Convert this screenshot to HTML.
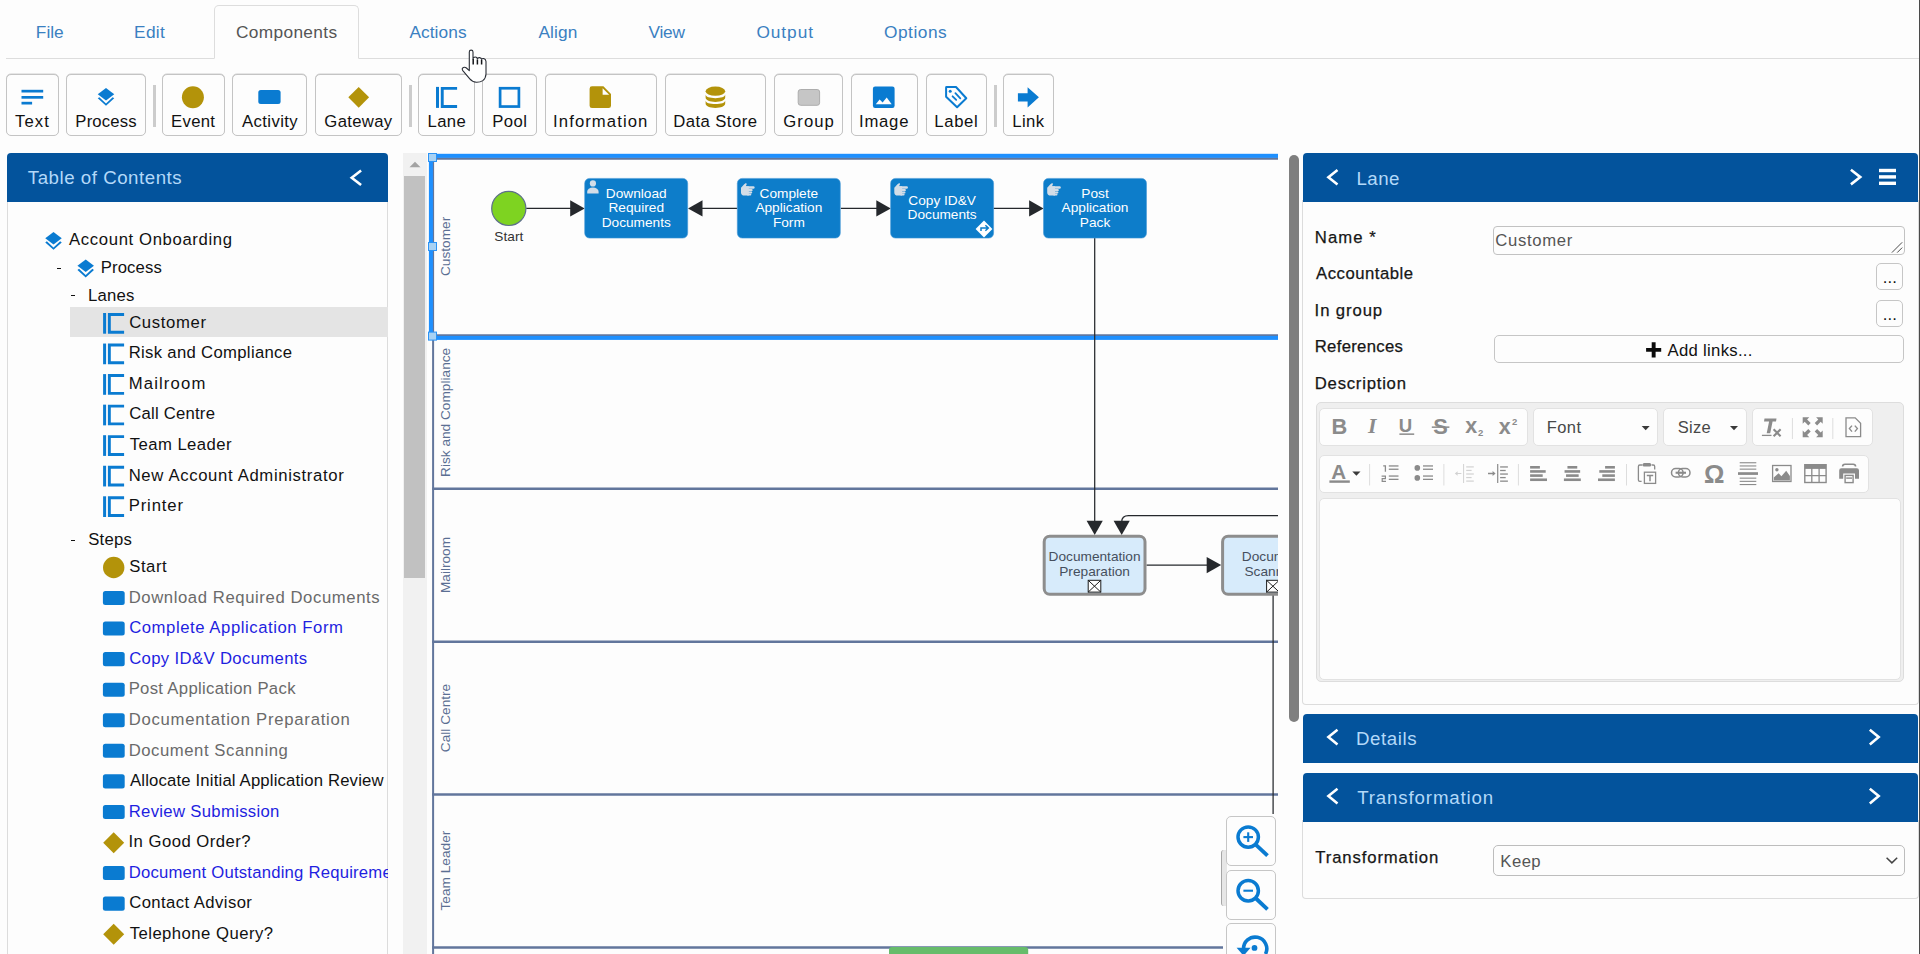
<!DOCTYPE html>
<html lang="en">
<head>
<meta charset="utf-8">
<title>Process Editor - Account Onboarding</title>
<style>
html,body{margin:0;padding:0}
body{width:1920px;height:954px;overflow:hidden;position:relative;background:#fdfdfd;
  font-family:"Liberation Sans",sans-serif;color:#111;font-size:16.7px}
*{box-sizing:border-box}
.abs,.t,.btn,.sep,.hdr,.pbody,.cke-g,.ibtn{position:absolute}
.t{white-space:nowrap;line-height:1;display:block}
svg{position:absolute;overflow:visible}
.btn{top:74px;height:62px;border:1px solid #c4c4c4;border-radius:5px;background:#fdfdfd;box-shadow:0 -0.5px 0.5px 0 #d0d0d0}
.sep{top:85px;height:42px;width:3px;background:#cccccc}
.hdr{background:#03539c;height:49px;border-radius:4px 4px 0 0}
.pbody{border:1px solid #dcdcdc;border-top:0;border-radius:0 0 4px 4px;background:#fdfdfd}
.ibtn{border:1px solid #c6c6c6;border-radius:5px;background:#fdfdfd}
.cke-g{border:1px solid #e2e2e2;border-radius:5px;background:#fdfdfd}
ul,li{list-style:none;margin:0;padding:0}
</style>
</head>
<body>
<nav class="abs" style="left:0;top:0;width:1920px;height:59px">
<div class="abs" style="left:6px;top:58px;width:1914px;height:1px;background:#dddddd"></div>
<div class="abs" style="left:214px;top:5px;width:145px;height:54px;border:1px solid #dddddd;border-bottom-color:#fdfdfd;border-radius:5px 5px 0 0;background:#fdfdfd"></div>
<a><span class="t" style="left:35.82px;top:24.00px;font-size:17.30px;color:#3a80c1;letter-spacing:0.007px;">File</span></a>
<a><span class="t" style="left:134.12px;top:24.00px;font-size:17.30px;color:#3a80c1;letter-spacing:0.274px;">Edit</span></a>
<a><span class="t" style="left:235.94px;top:24.00px;font-size:17.30px;color:#555555;letter-spacing:0.353px;">Components</span></a>
<a><span class="t" style="left:409.40px;top:24.00px;font-size:17.30px;color:#3a80c1;letter-spacing:0.079px;">Actions</span></a>
<a><span class="t" style="left:538.50px;top:24.00px;font-size:17.30px;color:#3a80c1;letter-spacing:0.097px;">Align</span></a>
<a><span class="t" style="left:648.60px;top:24.00px;font-size:17.30px;color:#3a80c1;letter-spacing:-0.278px;">View</span></a>
<a><span class="t" style="left:756.42px;top:24.00px;font-size:17.30px;color:#3a80c1;letter-spacing:0.939px;">Output</span></a>
<a><span class="t" style="left:884.02px;top:24.00px;font-size:17.30px;color:#3a80c1;letter-spacing:0.511px;">Options</span></a>
</nav>
<div class="abs" id="toolbar" style="left:0;top:0;width:0;height:0">
<div class="btn" style="left:6.0px;width:53.0px"></div><svg style="left:0;top:0" width="1" height="1"><rect x="21.5" y="89.8" width="21.7" height="2.7" fill="#0a7bd1"/><rect x="21.5" y="96" width="21.7" height="2.7" fill="#0a7bd1"/><rect x="21.5" y="101.8" width="10.6" height="2.7" fill="#0a7bd1"/></svg><span class="t" style="left:14.92px;top:114.00px;font-size:16.70px;color:#111;letter-spacing:1.135px;">Text</span>
<div class="btn" style="left:66.0px;width:80.0px"></div><svg style="left:0;top:0" width="1" height="1"><path d="M106.00 87.90 L114.25 94.15 L106.00 100.40 L97.75 94.15 Z" fill="#0a7bd1"/><path d="M97.75 98.35 L99.35 97.15 L106.00 103.40 L112.65 97.15 L114.25 98.35 L106.00 105.70 Z" fill="#0a7bd1"/></svg><span class="t" style="left:75.36px;top:114.00px;font-size:16.70px;color:#111;letter-spacing:0.149px;">Process</span>
<div class="btn" style="left:162.0px;width:62.5px"></div><svg style="left:0;top:0" width="1" height="1"><circle cx="192.9" cy="97.3" r="11" fill="#b3930a"/></svg><span class="t" style="left:171.06px;top:114.00px;font-size:16.70px;color:#111;letter-spacing:0.320px;">Event</span>
<div class="btn" style="left:232.0px;width:75.0px"></div><svg style="left:0;top:0" width="1" height="1"><rect x="258.3" y="90" width="22.3" height="14" rx="2.5" fill="#0a7bd1"/></svg><span class="t" style="left:242.00px;top:114.00px;font-size:16.70px;color:#111;letter-spacing:0.402px;">Activity</span>
<div class="btn" style="left:315.0px;width:87.0px"></div><svg style="left:0;top:0" width="1" height="1"><path d="M358.7 86.9 L369.1 97.3 L358.7 107.7 L348.3 97.3 Z" fill="#b3930a"/></svg><span class="t" style="left:324.37px;top:114.00px;font-size:16.70px;color:#111;letter-spacing:0.322px;">Gateway</span>
<div class="btn" style="left:418.0px;width:57.0px"></div><svg style="left:0;top:0" width="1" height="1"><rect x="436.00" y="86.90" width="3.00" height="21.00" fill="#0a7bd1"/><path d="M457.10 88.35 H442.25 V106.45 H457.10" fill="none" stroke="#0a7bd1" stroke-width="2.90"/></svg><span class="t" style="left:427.41px;top:114.00px;font-size:16.70px;color:#111;letter-spacing:0.441px;">Lane</span>
<div class="btn" style="left:482.0px;width:55.0px"></div><svg style="left:0;top:0" width="1" height="1"><rect x="500.1" y="88.25" width="18.8" height="18.3" fill="none" stroke="#0a7bd1" stroke-width="2.7"/></svg><span class="t" style="left:492.26px;top:114.00px;font-size:16.70px;color:#111;letter-spacing:0.450px;">Pool</span>
<div class="btn" style="left:544.5px;width:112.0px"></div><svg style="left:0;top:0" width="1" height="1"><path d="M592 86.3 H603.4 L611 93.9 V105.7 a2.4 2.4 0 0 1 -2.4 2.4 H592 a2.4 2.4 0 0 1 -2.4 -2.4 V88.7 a2.4 2.4 0 0 1 2.4 -2.4 Z" fill="#b3930a"/><path d="M602.6 88.2 L609.2 94.8 H602.6 Z" fill="#fdfdfd"/></svg><span class="t" style="left:553.10px;top:114.00px;font-size:16.70px;color:#111;letter-spacing:1.078px;">Information</span>
<div class="btn" style="left:664.5px;width:101.5px"></div><svg style="left:0;top:0" width="1" height="1"><ellipse cx="715.4" cy="91.2" rx="9.8" ry="4.6" fill="#b3930a"/><path d="M705.6 94.6 C705.6 96.9 709.8 98.2 715.4 98.2 C721 98.2 725.2 96.9 725.2 94.6 V97.6 C725.2 100.2 721 101.9 715.4 101.9 C709.8 101.9 705.6 100.2 705.6 97.6 Z" fill="#b3930a"/><path d="M705.6 100.4 C705.6 102.7 709.8 104 715.4 104 C721 104 725.2 102.7 725.2 100.4 V103.6 C725.2 106.2 721 108 715.4 108 C709.8 108 705.6 106.2 705.6 103.6 Z" fill="#b3930a"/></svg><span class="t" style="left:673.26px;top:114.00px;font-size:16.70px;color:#111;letter-spacing:0.433px;">Data Store</span>
<div class="btn" style="left:774.0px;width:69.0px"></div><svg style="left:0;top:0" width="1" height="1"><rect x="798.2" y="89.5" width="21.4" height="15.8" rx="2.5" fill="#c6c6c6" stroke="#adadad" stroke-width="1"/></svg><span class="t" style="left:783.37px;top:114.00px;font-size:16.70px;color:#111;letter-spacing:1.002px;">Group</span>
<div class="btn" style="left:850.5px;width:67.0px"></div><svg style="left:0;top:0" width="1" height="1"><rect x="872.9" y="86.5" width="21.7" height="21.4" rx="2.2" fill="#0a7bd1"/><path d="M875.8 104.2 L879.6 99.6 L882.6 102.6 L886.7 97.5 L891.7 104.2 Z" fill="#fdfdfd"/></svg><span class="t" style="left:859.00px;top:114.00px;font-size:16.70px;color:#111;letter-spacing:0.769px;">Image</span>
<div class="btn" style="left:925.5px;width:61.0px"></div><svg style="left:0;top:0" width="1" height="1"><path d="M946.1 87.4 Q946.1 87 946.6 87 H956 L966.3 98.2 L957.1 107.2 L946.1 96.8 Z" fill="none" stroke="#0a7bd1" stroke-width="2" stroke-linejoin="round"/><circle cx="950.2" cy="91.3" r="1.5" fill="#0a7bd1"/><path d="M955.4 93.2 L960.3 98.3 M952.6 96.3 L956.2 99.9" stroke="#0a7bd1" stroke-width="1.8" stroke-linecap="round" fill="none"/></svg><span class="t" style="left:934.36px;top:114.00px;font-size:16.70px;color:#111;letter-spacing:0.603px;">Label</span>
<div class="btn" style="left:1003.0px;width:51.0px"></div><svg style="left:0;top:0" width="1" height="1"><path d="M1017.9 93.2 H1027.6 V87.2 L1038.9 97.3 L1027.6 107.4 V101.4 H1017.9 Z" fill="#0a7bd1"/></svg><span class="t" style="left:1012.16px;top:114.00px;font-size:16.70px;color:#111;letter-spacing:0.439px;">Link</span>
<div class="sep" style="left:153px"></div><div class="sep" style="left:409px"></div><div class="sep" style="left:994px"></div>
</div>
<aside class="abs" style="left:0;top:0;width:388px;height:954px;overflow:hidden">
<div class="abs" style="left:7px;top:202px;width:381px;height:760px;border-left:1px solid #dcdcdc;border-right:1px solid #dcdcdc"></div>
<div class="hdr" style="left:7px;top:153px;width:381px"></div><span class="t" style="left:27.83px;top:169.00px;font-size:18.70px;color:#b3d9f9;letter-spacing:0.524px;">Table of Contents</span><svg style="left:0;top:0" width="1" height="1"><path d="M361.09 170.50 L351.73 177.75 L361.09 185.00" fill="none" stroke="#ffffff" stroke-width="2.60"/></svg>
<ul>
<li><svg style="left:0;top:0" width="1" height="1"><path d="M53.50 232.00 L61.75 238.25 L53.50 244.50 L45.25 238.25 Z" fill="#0a7bd1"/><path d="M45.25 242.45 L46.85 241.25 L53.50 247.50 L60.15 241.25 L61.75 242.45 L53.50 249.80 Z" fill="#0a7bd1"/></svg><span class="t" style="left:69.10px;top:232.00px;font-size:16.70px;color:#111;letter-spacing:0.633px;">Account Onboarding</span></li>
<li><div class="abs" style="left:57px;top:268px;width:4.3px;height:1px;background:#111"></div><svg style="left:0;top:0" width="1" height="1"><path d="M85.70 259.60 L93.95 265.85 L85.70 272.10 L77.45 265.85 Z" fill="#0a7bd1"/><path d="M77.45 270.05 L79.05 268.85 L85.70 275.10 L92.35 268.85 L93.95 270.05 L85.70 277.40 Z" fill="#0a7bd1"/></svg><span class="t" style="left:100.66px;top:260.00px;font-size:16.70px;color:#111;letter-spacing:0.149px;">Process</span></li>
<li><div class="abs" style="left:70.8px;top:295px;width:4.3px;height:1px;background:#111"></div><span class="t" style="left:88.06px;top:288.00px;font-size:16.70px;color:#111;letter-spacing:0.205px;">Lanes</span></li>
<li><div class="abs" style="left:70px;top:307px;width:318px;height:30px;background:#e4e4e4"></div></li>
<li><svg style="left:0;top:0" width="1" height="1"><rect x="103.10" y="313.00" width="3.00" height="20.70" fill="#0a7bd1"/><path d="M124.10 314.45 H109.35 V332.25 H124.10" fill="none" stroke="#0a7bd1" stroke-width="2.90"/></svg><span class="t" style="left:129.16px;top:315.00px;font-size:16.70px;color:#111;letter-spacing:0.638px;">Customer</span></li>
<li><svg style="left:0;top:0" width="1" height="1"><rect x="103.10" y="343.55" width="3.00" height="20.70" fill="#0a7bd1"/><path d="M124.10 345.00 H109.35 V362.80 H124.10" fill="none" stroke="#0a7bd1" stroke-width="2.90"/></svg><span class="t" style="left:128.66px;top:345.00px;font-size:16.70px;color:#111;letter-spacing:0.318px;">Risk and Compliance</span></li>
<li><svg style="left:0;top:0" width="1" height="1"><rect x="103.10" y="374.10" width="3.00" height="20.70" fill="#0a7bd1"/><path d="M124.10 375.55 H109.35 V393.35 H124.10" fill="none" stroke="#0a7bd1" stroke-width="2.90"/></svg><span class="t" style="left:128.66px;top:376.00px;font-size:16.70px;color:#111;letter-spacing:1.146px;">Mailroom</span></li>
<li><svg style="left:0;top:0" width="1" height="1"><rect x="103.10" y="404.65" width="3.00" height="20.70" fill="#0a7bd1"/><path d="M124.10 406.10 H109.35 V423.90 H124.10" fill="none" stroke="#0a7bd1" stroke-width="2.90"/></svg><span class="t" style="left:129.16px;top:406.00px;font-size:16.70px;color:#111;letter-spacing:0.229px;">Call Centre</span></li>
<li><svg style="left:0;top:0" width="1" height="1"><rect x="103.10" y="435.20" width="3.00" height="20.70" fill="#0a7bd1"/><path d="M124.10 436.65 H109.35 V454.45 H124.10" fill="none" stroke="#0a7bd1" stroke-width="2.90"/></svg><span class="t" style="left:129.67px;top:437.00px;font-size:16.70px;color:#111;letter-spacing:0.457px;">Team Leader</span></li>
<li><svg style="left:0;top:0" width="1" height="1"><rect x="103.10" y="465.75" width="3.00" height="20.70" fill="#0a7bd1"/><path d="M124.10 467.20 H109.35 V485.00 H124.10" fill="none" stroke="#0a7bd1" stroke-width="2.90"/></svg><span class="t" style="left:128.66px;top:468.00px;font-size:16.70px;color:#111;letter-spacing:0.656px;">New Account Administrator</span></li>
<li><svg style="left:0;top:0" width="1" height="1"><rect x="103.10" y="496.30" width="3.00" height="20.70" fill="#0a7bd1"/><path d="M124.10 497.75 H109.35 V515.55 H124.10" fill="none" stroke="#0a7bd1" stroke-width="2.90"/></svg><span class="t" style="left:128.66px;top:498.00px;font-size:16.70px;color:#111;letter-spacing:0.878px;">Printer</span></li>
<li><div class="abs" style="left:70.8px;top:540px;width:4.3px;height:1px;background:#111"></div><span class="t" style="left:88.15px;top:532.00px;font-size:16.70px;color:#111;letter-spacing:0.258px;">Steps</span></li>
<li><svg style="left:0;top:0" width="1" height="1"><circle cx="113.7" cy="567.50" r="10.7" fill="#b3930a"/></svg><span class="t" style="left:129.25px;top:559.00px;font-size:16.70px;color:#111;letter-spacing:0.533px;">Start</span></li>
<li><svg style="left:0;top:0" width="1" height="1"><rect x="102.9" y="590.96" width="21.8" height="14.1" rx="2.5" fill="#0a7bd1"/></svg><span class="t" style="left:128.66px;top:590.00px;font-size:16.70px;color:#6a6a6a;letter-spacing:0.590px;">Download Required Documents</span></li>
<li><svg style="left:0;top:0" width="1" height="1"><rect x="102.9" y="621.52" width="21.8" height="14.1" rx="2.5" fill="#0a7bd1"/></svg><span class="t" style="left:129.16px;top:620.00px;font-size:16.70px;color:#1f1fe0;letter-spacing:0.562px;">Complete Application Form</span></li>
<li><svg style="left:0;top:0" width="1" height="1"><rect x="102.9" y="652.08" width="21.8" height="14.1" rx="2.5" fill="#0a7bd1"/></svg><span class="t" style="left:129.16px;top:651.00px;font-size:16.70px;color:#1f1fe0;letter-spacing:0.356px;">Copy ID&amp;V Documents</span></li>
<li><svg style="left:0;top:0" width="1" height="1"><rect x="102.9" y="682.64" width="21.8" height="14.1" rx="2.5" fill="#0a7bd1"/></svg><span class="t" style="left:128.66px;top:681.00px;font-size:16.70px;color:#6a6a6a;letter-spacing:0.317px;">Post Application Pack</span></li>
<li><svg style="left:0;top:0" width="1" height="1"><rect x="102.9" y="713.20" width="21.8" height="14.1" rx="2.5" fill="#0a7bd1"/></svg><span class="t" style="left:128.66px;top:712.00px;font-size:16.70px;color:#6a6a6a;letter-spacing:0.752px;">Documentation Preparation</span></li>
<li><svg style="left:0;top:0" width="1" height="1"><rect x="102.9" y="743.76" width="21.8" height="14.1" rx="2.5" fill="#0a7bd1"/></svg><span class="t" style="left:128.66px;top:743.00px;font-size:16.70px;color:#6a6a6a;letter-spacing:0.554px;">Document Scanning</span></li>
<li><svg style="left:0;top:0" width="1" height="1"><rect x="102.9" y="774.32" width="21.8" height="14.1" rx="2.5" fill="#0a7bd1"/></svg><span class="t" style="left:130.00px;top:773.00px;font-size:16.70px;color:#111;letter-spacing:0.172px;">Allocate Initial Application Review</span></li>
<li><svg style="left:0;top:0" width="1" height="1"><rect x="102.9" y="804.88" width="21.8" height="14.1" rx="2.5" fill="#0a7bd1"/></svg><span class="t" style="left:128.66px;top:804.00px;font-size:16.70px;color:#1f1fe0;letter-spacing:0.321px;">Review Submission</span></li>
<li><svg style="left:0;top:0" width="1" height="1"><path d="M113.7 832.14 L124.2 842.64 L113.7 853.14 L103.2 842.64 Z" fill="#b3930a"/></svg><span class="t" style="left:128.50px;top:834.00px;font-size:16.70px;color:#111;letter-spacing:0.467px;">In Good Order?</span></li>
<li><svg style="left:0;top:0" width="1" height="1"><rect x="102.9" y="866.00" width="21.8" height="14.1" rx="2.5" fill="#0a7bd1"/></svg><span class="t" style="left:128.66px;top:865.00px;font-size:16.70px;color:#1f1fe0;letter-spacing:0.211px;">Document Outstanding Requirements</span></li>
<li><svg style="left:0;top:0" width="1" height="1"><rect x="102.9" y="896.56" width="21.8" height="14.1" rx="2.5" fill="#0a7bd1"/></svg><span class="t" style="left:129.16px;top:895.00px;font-size:16.70px;color:#111;letter-spacing:0.420px;">Contact Advisor</span></li>
<li><svg style="left:0;top:0" width="1" height="1"><path d="M113.7 923.82 L124.2 934.32 L113.7 944.82 L103.2 934.32 Z" fill="#b3930a"/></svg><span class="t" style="left:129.67px;top:926.00px;font-size:16.70px;color:#111;letter-spacing:0.464px;">Telephone Query?</span></li>
</ul>
</aside>
<div class="abs" style="left:403px;top:153px;width:24px;height:801px;background:#f1f1f1"></div><svg style="left:0;top:0" width="1" height="1"><path d="M409.5 167.2 L415 161.8 L420.5 167.2 Z" fill="#a3a3a3"/></svg><div class="abs" style="left:404px;top:176px;width:21px;height:402px;background:#c1c1c1"></div>
<div class="abs" style="left:1289.2px;top:155px;width:9.6px;height:567px;background:#7f7f7f;border-radius:5px"></div>
<div class="abs" style="left:1919px;top:0;width:1px;height:954px;background:#4a4a4a"></div>
<svg id="diagram" style="left:0;top:0" width="1920" height="954" viewBox="0 0 1920 954" font-family="'Liberation Sans', sans-serif">
<defs><clipPath id="vp"><rect x="428" y="153" width="850" height="801"/></clipPath><clipPath id="vp2"><rect x="428" y="153" width="795" height="801"/></clipPath></defs>
<g clip-path="url(#vp)">
<path d="M433.1 158 V960" stroke="#62769c" stroke-width="2" fill="none"/><path d="M432.2 158.40 H1300" stroke="#62769c" stroke-width="2.5" fill="none"/><path d="M432.2 335.50 H1300" stroke="#62769c" stroke-width="2.5" fill="none"/><path d="M432.2 488.75 H1300" stroke="#62769c" stroke-width="2.5" fill="none"/><path d="M432.2 641.75 H1300" stroke="#62769c" stroke-width="2.5" fill="none"/><path d="M432.2 794.50 H1300" stroke="#62769c" stroke-width="2.5" fill="none"/><g clip-path="url(#vp2)"><path d="M432.2 947.6 H1300" stroke="#62769c" stroke-width="2.5" fill="none"/></g>
<text transform="translate(450.3 246.40) rotate(-90)" text-anchor="middle" font-size="13.68" fill="#5b6f93">Customer</text><text transform="translate(450.3 412.40) rotate(-90)" text-anchor="middle" font-size="13.68" fill="#5b6f93">Risk and Compliance</text><text transform="translate(450.3 565.00) rotate(-90)" text-anchor="middle" font-size="13.68" fill="#5b6f93">Mailroom</text><text transform="translate(450.3 718.00) rotate(-90)" text-anchor="middle" font-size="13.68" fill="#5b6f93">Call Centre</text><text transform="translate(450.3 870.60) rotate(-90)" text-anchor="middle" font-size="13.68" fill="#5b6f93">Team Leader</text>
<rect x="430.9" y="155.8" width="900" height="182.1" fill="none" stroke="#1e90ff" stroke-width="4"/><rect x="428.50" y="153.50" width="8" height="8" fill="#a8d2f4" stroke="#2b93f5" stroke-width="1"/><rect x="428.50" y="242.50" width="8" height="8" fill="#a8d2f4" stroke="#2b93f5" stroke-width="1"/><rect x="428.50" y="332.10" width="8" height="8" fill="#a8d2f4" stroke="#2b93f5" stroke-width="1"/>
<path d="M526.20 208.40 H571.20" stroke="#25282c" stroke-width="1.3" fill="none"/><path d="M570.20 200.20 L584.70 208.40 L570.20 216.60 Z" fill="#25282c"/><path d="M737.30 208.40 H701.50" stroke="#25282c" stroke-width="1.3" fill="none"/><path d="M702.50 200.20 L688.00 208.40 L702.50 216.60 Z" fill="#25282c"/><path d="M840.80 208.40 H877.30" stroke="#25282c" stroke-width="1.3" fill="none"/><path d="M876.30 200.20 L890.80 208.40 L876.30 216.60 Z" fill="#25282c"/><path d="M993.40 208.40 H1030.10" stroke="#25282c" stroke-width="1.3" fill="none"/><path d="M1029.10 200.20 L1043.60 208.40 L1029.10 216.60 Z" fill="#25282c"/><path d="M1094.7 238 V521.5" stroke="#25282c" stroke-width="1.25" fill="none"/><path d="M1086.60 520.70 L1102.80 520.70 L1094.70 534.90 Z" fill="#25282c"/><path d="M1300 515.7 H1128.5 Q1121.7 515.7 1121.7 522" stroke="#25282c" stroke-width="1.25" fill="none"/><path d="M1113.60 520.70 L1129.80 520.70 L1121.70 534.90 Z" fill="#25282c"/><path d="M1146.50 565.10 H1207.70" stroke="#25282c" stroke-width="1.3" fill="none"/><path d="M1206.70 556.90 L1221.20 565.10 L1206.70 573.30 Z" fill="#25282c"/><path d="M1273.1 595 V814" stroke="#25282c" stroke-width="1.25" fill="none"/>
<circle cx="508.8" cy="208.4" r="17.1" fill="#7ed321" stroke="#5e708b" stroke-width="1.2"/><text x="508.80" y="240.60" text-anchor="middle" font-size="13.68" fill="#333333">Start</text>
<rect x="584.70" y="178.4" width="103" height="59.7" rx="5" fill="#0d7dca" stroke="#4a9bd6" stroke-width="0.6"/><circle cx="592.90" cy="183.40" r="3.1" fill="#d3dde7"/><path d="M587.20 193.40 v-1.6 a5.7 4.2 0 0 1 11.4 0 v1.6 Z" fill="#d3dde7"/><text x="636.25" y="197.50" text-anchor="middle" font-size="13.68" fill="#ffffff">Download</text><text x="636.25" y="212.20" text-anchor="middle" font-size="13.68" fill="#ffffff">Required</text><text x="636.25" y="226.90" text-anchor="middle" font-size="13.68" fill="#ffffff">Documents</text><rect x="737.30" y="178.4" width="103" height="59.7" rx="5" fill="#0d7dca" stroke="#4a9bd6" stroke-width="0.6"/><g transform="translate(740.80 183.10)" fill="#d3dde7"><path d="M0.2 4.6 L3.4 1.2 L5.2 0 L6 1 L5 3.2 H8 V12.5 H3.7 Q0.2 12.5 0.2 9.4 Z"/><rect x="4" y="3.2" width="9.8" height="2.5" rx="1.2"/><rect x="6" y="6" width="5.8" height="2.1" rx="1"/><rect x="6" y="8.3" width="5.4" height="2" rx="1"/><rect x="6" y="10.5" width="4.5" height="2" rx="1"/></g><text x="788.85" y="197.50" text-anchor="middle" font-size="13.68" fill="#ffffff">Complete</text><text x="788.85" y="212.20" text-anchor="middle" font-size="13.68" fill="#ffffff">Application</text><text x="788.85" y="226.90" text-anchor="middle" font-size="13.68" fill="#ffffff">Form</text><rect x="890.60" y="178.4" width="103" height="59.7" rx="5" fill="#0d7dca" stroke="#4a9bd6" stroke-width="0.6"/><g transform="translate(894.10 183.10)" fill="#d3dde7"><path d="M0.2 4.6 L3.4 1.2 L5.2 0 L6 1 L5 3.2 H8 V12.5 H3.7 Q0.2 12.5 0.2 9.4 Z"/><rect x="4" y="3.2" width="9.8" height="2.5" rx="1.2"/><rect x="6" y="6" width="5.8" height="2.1" rx="1"/><rect x="6" y="8.3" width="5.4" height="2" rx="1"/><rect x="6" y="10.5" width="4.5" height="2" rx="1"/></g><text x="942.15" y="204.60" text-anchor="middle" font-size="13.68" fill="#ffffff">Copy ID&amp;V</text><text x="942.15" y="219.30" text-anchor="middle" font-size="13.68" fill="#ffffff">Documents</text><path d="M984 220.5 L992.4 228.9 L984 237.4 L975.6 228.9 Z" fill="#ffffff"/><path d="M981 231 V228 H987.6 M985.4 225.3 L988.3 228 L985.4 230.7" fill="none" stroke="#0d7dca" stroke-width="1.5"/><rect x="1043.50" y="178.4" width="103" height="59.7" rx="5" fill="#0d7dca" stroke="#4a9bd6" stroke-width="0.6"/><g transform="translate(1047.00 183.10)" fill="#d3dde7"><path d="M0.2 4.6 L3.4 1.2 L5.2 0 L6 1 L5 3.2 H8 V12.5 H3.7 Q0.2 12.5 0.2 9.4 Z"/><rect x="4" y="3.2" width="9.8" height="2.5" rx="1.2"/><rect x="6" y="6" width="5.8" height="2.1" rx="1"/><rect x="6" y="8.3" width="5.4" height="2" rx="1"/><rect x="6" y="10.5" width="4.5" height="2" rx="1"/></g><text x="1095.05" y="197.50" text-anchor="middle" font-size="13.68" fill="#ffffff">Post</text><text x="1095.05" y="212.20" text-anchor="middle" font-size="13.68" fill="#ffffff">Application</text><text x="1095.05" y="226.90" text-anchor="middle" font-size="13.68" fill="#ffffff">Pack</text>
<rect x="1044.20" y="536.3" width="100.8" height="57.9" rx="5.5" fill="#d7ebfb" stroke="#8d8d8d" stroke-width="3"/><text x="1094.60" y="560.90" text-anchor="middle" font-size="13.68" fill="#464f5d">Documentation</text><text x="1094.60" y="575.60" text-anchor="middle" font-size="13.68" fill="#464f5d">Preparation</text><rect x="1088.20" y="580.3" width="12.6" height="11.8" fill="#ffffff" stroke="#1c1c1c" stroke-width="1"/><path d="M1088.20 580.3 L1100.80 592.1 M1100.80 580.3 L1088.20 592.1" stroke="#1c1c1c" stroke-width="1"/><rect x="1222.60" y="536.3" width="100.8" height="57.9" rx="5.5" fill="#d7ebfb" stroke="#8d8d8d" stroke-width="3"/><text x="1273.00" y="560.90" text-anchor="middle" font-size="13.68" fill="#464f5d">Document</text><text x="1273.00" y="575.60" text-anchor="middle" font-size="13.68" fill="#464f5d">Scanning</text><rect x="1266.60" y="580.3" width="12.6" height="11.8" fill="#ffffff" stroke="#1c1c1c" stroke-width="1"/><path d="M1266.60 580.3 L1279.20 592.1 M1279.20 580.3 L1266.60 592.1" stroke="#1c1c1c" stroke-width="1"/>
<path d="M889 954 V950 a3 3 0 0 1 3 -3 H1025.2 a3 3 0 0 1 3 3 V954 Z" fill="#67bc6b"/></g>
</svg>
<div class="abs" style="left:1221px;top:850px;width:6px;height:56px;background:#e6e6e6;border-left:1.5px solid #a6a6a6;border-radius:3px 0 0 3px"></div><div class="ibtn" style="left:1226px;top:816px;width:50px;height:50px"></div><div class="ibtn" style="left:1226px;top:870px;width:50px;height:50px"></div><div class="ibtn" style="left:1226px;top:923px;width:50px;height:50px"></div><svg style="left:0;top:0" width="1920" height="954" viewBox="0 0 1920 954"><circle cx="1248.2" cy="837.10" r="10.2" fill="none" stroke="#0a7bd1" stroke-width="3.5"/><path d="M1256 844.90 L1267.5 855.70" stroke="#0a7bd1" stroke-width="3.9" fill="none"/><path d="M1243.4 837.10 H1253" stroke="#0a7bd1" stroke-width="2.1" fill="none"/><path d="M1248.2 832.30 V841.90" stroke="#0a7bd1" stroke-width="2.1" fill="none"/><circle cx="1248.2" cy="890.70" r="10.2" fill="none" stroke="#0a7bd1" stroke-width="3.5"/><path d="M1256 898.50 L1267.5 909.30" stroke="#0a7bd1" stroke-width="3.9" fill="none"/><path d="M1243.4 890.70 H1253" stroke="#0a7bd1" stroke-width="2.1" fill="none"/><path d="M1243.6 949.5 A11.6 11.6 0 1 1 1265.5 954" fill="none" stroke="#0a7bd1" stroke-width="3.6"/><path d="M1236.6 947.8 H1250.6 L1243.6 955.8 Z" fill="#0a7bd1"/><circle cx="1254.5" cy="947.9" r="2.9" fill="#0a7bd1"/></svg>
<section class="abs" style="left:0;top:0;width:0;height:0">
<div class="pbody" style="left:1302px;top:200px;width:617px;height:505px"></div><div class="hdr" style="left:1303px;top:153px;width:615px"></div><svg style="left:0;top:0" width="1" height="1"><path d="M1337.49 170.00 L1328.43 177.20 L1337.49 184.40" fill="none" stroke="#ffffff" stroke-width="2.60"/></svg><span class="t" style="left:1356.50px;top:170.00px;font-size:18.70px;color:#b3d9f9;letter-spacing:0.422px;">Lane</span><svg style="left:0;top:0" width="1" height="1"><path d="M1850.91 169.80 L1860.27 177.10 L1850.91 184.40" fill="none" stroke="#ffffff" stroke-width="2.60"/></svg><svg style="left:0;top:0" width="1" height="1"><rect x="1879" y="168.8" width="17" height="3.4" fill="#fff"/><rect x="1879" y="175.2" width="17" height="3.4" fill="#fff"/><rect x="1879" y="181.6" width="17" height="3.4" fill="#fff"/></svg>
<span class="t" style="left:1314.76px;top:230.00px;font-size:16.70px;color:#161616;letter-spacing:1.077px;-webkit-text-stroke:0.25px #161616;">Name *</span><div class="ibtn" style="left:1493px;top:226px;width:412px;height:29px;border-radius:4px;border-color:#c2c2c2"></div><span class="t" style="left:1495.16px;top:233.00px;font-size:16.70px;color:#555555;letter-spacing:0.695px;">Customer</span><svg style="left:0;top:0" width="1" height="1"><path d="M1891.9 252.6 L1902.2 242.3 M1897.2 252.6 L1902.2 247.6" stroke="#4d4d4d" stroke-width="1" fill="none"/></svg>
<span class="t" style="left:1316.10px;top:266.00px;font-size:16.70px;color:#161616;letter-spacing:0.517px;-webkit-text-stroke:0.25px #161616;">Accountable</span><div class="ibtn" style="left:1876px;top:263px;width:27px;height:27px"></div><span class="t" style="left:1882.70px;top:270.00px;font-size:16.70px;color:#111;letter-spacing:0.125px;">...</span><span class="t" style="left:1314.60px;top:303.00px;font-size:16.70px;color:#161616;letter-spacing:0.902px;-webkit-text-stroke:0.25px #161616;">In group</span><div class="ibtn" style="left:1876px;top:300px;width:27px;height:27px"></div><span class="t" style="left:1882.70px;top:307.00px;font-size:16.70px;color:#111;letter-spacing:0.125px;">...</span>
<span class="t" style="left:1314.76px;top:339.00px;font-size:16.70px;color:#161616;letter-spacing:0.313px;-webkit-text-stroke:0.25px #161616;">References</span><div class="ibtn" style="left:1494px;top:335px;width:410px;height:28px"></div><svg style="left:0;top:0" width="1" height="1"><path d="M1646.1 349.85 H1661.2 M1653.65 342.3 V357.4" stroke="#0b0b0b" stroke-width="3.9" fill="none"/></svg><span class="t" style="left:1667.60px;top:343.00px;font-size:16.70px;color:#111;letter-spacing:0.290px;">Add links...</span>
<span class="t" style="left:1314.76px;top:376.00px;font-size:16.70px;color:#161616;letter-spacing:0.772px;-webkit-text-stroke:0.25px #161616;">Description</span><div class="abs" style="left:1316px;top:402px;width:588px;height:280px;background:#efefef;border:1px solid #dddddd;border-radius:5px"></div><div class="cke-g" style="left:1319px;top:408px;width:209px;height:38px"></div><div class="cke-g" style="left:1533px;top:408px;width:125px;height:38px"></div><div class="cke-g" style="left:1663px;top:408px;width:84px;height:38px"></div><div class="cke-g" style="left:1752px;top:408px;width:121px;height:38px"></div><div class="cke-g" style="left:1319px;top:455px;width:550px;height:38px"></div><div class="cke-g" style="left:1319px;top:498px;width:582px;height:182px"></div>
<span class="t" style="left:1331.38px;top:416.00px;font-size:21.80px;color:#8b8b8b;font-weight:bold;">B</span><span class="t" style="left:1367.98px;top:416.00px;font-size:21.80px;color:#8b8b8b;font-weight:bold;font-style:italic;font-family:'Liberation Serif',serif;">I</span><span class="t" style="left:1398.68px;top:417.00px;font-size:18.60px;color:#8b8b8b;font-weight:bold;">U</span><svg style="left:0;top:0" width="1" height="1"><rect x="1399.4" y="433.4" width="14.8" height="1.5" fill="#8b8b8b"/><rect x="1431.8" y="426.4" width="17.6" height="1.5" fill="#8b8b8b"/></svg><span class="t" style="left:1433.25px;top:416.00px;font-size:21.80px;color:#8b8b8b;font-weight:bold;">S</span><span class="t" style="left:1465.19px;top:416.00px;font-size:21.50px;color:#8b8b8b;font-weight:bold;">x</span><span class="t" style="left:1478.12px;top:428.00px;font-size:9.50px;color:#8b8b8b;font-weight:bold;">2</span><span class="t" style="left:1498.79px;top:417.00px;font-size:21.50px;color:#8b8b8b;font-weight:bold;">x</span><span class="t" style="left:1511.91px;top:417.00px;font-size:9.50px;color:#8b8b8b;font-weight:bold;">2</span><span class="t" style="left:1546.68px;top:419.00px;font-size:16.50px;color:#484848;letter-spacing:0.450px;">Font</span><span class="t" style="left:1677.76px;top:419.00px;font-size:16.50px;color:#484848;letter-spacing:0.241px;">Size</span><span class="t" style="left:1331.19px;top:462.00px;font-size:20.60px;color:#8b8b8b;font-weight:bold;">A</span><span class="t" style="left:1703.98px;top:462.00px;font-size:25.50px;color:#8b8b8b;font-weight:bold;">Ω</span><svg style="left:0;top:0" width="1920" height="954" viewBox="0 0 1920 954"><path d="M1764.5 418.6 H1776.5 L1776 421.4 H1772.6 L1770.2 433.2 H1766.7 L1769.1 421.4 H1764 Z" fill="#8b8b8b"/><path d="M1761.9 435.4 H1771.5" stroke="#8b8b8b" stroke-width="1.3"/><path d="M1773.6 429.3 L1780.6 436.3 M1780.6 429.3 L1773.6 436.3" stroke="#8b8b8b" stroke-width="2.1"/><path d="M1792.4 418 V439" stroke="#dddddd" stroke-width="1"/><path d="M1802.70 417.20 h6.60 l-2.20 2.20 l3.60 3.60 l-2.40 2.40 l-3.60 -3.60 l-2.00 2.00 Z" fill="#8b8b8b"/><path d="M1802.70 437.20 h6.60 l-2.20 -2.20 l3.60 -3.60 l-2.40 -2.40 l-3.60 3.60 l-2.00 -2.00 Z" fill="#8b8b8b"/><path d="M1822.70 417.20 h-6.60 l2.20 2.20 l-3.60 3.60 l2.40 2.40 l3.60 -3.60 l2.00 2.00 Z" fill="#8b8b8b"/><path d="M1822.70 437.20 h-6.60 l2.20 -2.20 l-3.60 -3.60 l2.40 -2.40 l3.60 3.60 l2.00 -2.00 Z" fill="#8b8b8b"/><path d="M1832.8 418 V439" stroke="#dddddd" stroke-width="1"/><path d="M1846 417.8 H1855.2 L1860.6 423.2 V436.6 H1846 Z" fill="none" stroke="#8b8b8b" stroke-width="1.3"/><path d="M1852 425.6 L1849.4 428.6 L1852 431.6 M1854.8 425.6 L1857.4 428.6 L1854.8 431.6" fill="none" stroke="#8b8b8b" stroke-width="1.4"/><path d="M1641.7 426 H1649.7 L1645.7 430.2 Z" fill="#3a3a3a"/><path d="M1730 426 H1738 L1734 430.2 Z" fill="#3a3a3a"/><rect x="1329.40" y="480.40" width="20.40" height="2.40" fill="#8b8b8b"/><path d="M1352.3 471.6 H1360.5 L1356.4 475.8 Z" fill="#3a3a3a"/><path d="M1369.60 464 V485.5" stroke="#dddddd" stroke-width="1"/><rect x="1388.80" y="465.30" width="9.70" height="1.30" fill="#8b8b8b"/><rect x="1388.80" y="468.60" width="9.70" height="1.30" fill="#8b8b8b"/><rect x="1388.80" y="475.40" width="9.70" height="1.30" fill="#8b8b8b"/><rect x="1388.80" y="478.70" width="9.70" height="1.30" fill="#8b8b8b"/><path d="M1383.2 465.8 H1385.4 V471.8" fill="none" stroke="#8b8b8b" stroke-width="1.3"/><path d="M1381.6 476.2 H1385.4 V478.6 H1382.2 V481.4 H1386" fill="none" stroke="#8b8b8b" stroke-width="1.2"/><circle cx="1417.3" cy="467.9" r="2.8" fill="#8b8b8b"/><circle cx="1417.3" cy="477.9" r="2.8" fill="#8b8b8b"/><rect x="1423.00" y="465.30" width="10.00" height="1.30" fill="#8b8b8b"/><rect x="1423.00" y="468.60" width="10.00" height="1.30" fill="#8b8b8b"/><rect x="1423.00" y="475.40" width="10.00" height="1.30" fill="#8b8b8b"/><rect x="1423.00" y="478.70" width="10.00" height="1.30" fill="#8b8b8b"/><path d="M1443.90 464 V485.5" stroke="#dddddd" stroke-width="1"/><path d="M1463.6 464 V483" stroke="#d2d2d2" stroke-width="1"/><rect x="1466.20" y="466.30" width="7.60" height="1.20" fill="#d2d2d2"/><rect x="1466.20" y="469.85" width="5.40" height="1.20" fill="#d2d2d2"/><rect x="1466.20" y="473.40" width="7.60" height="1.20" fill="#d2d2d2"/><rect x="1466.20" y="476.95" width="5.40" height="1.20" fill="#d2d2d2"/><rect x="1466.20" y="480.50" width="7.60" height="1.20" fill="#d2d2d2"/><path d="M1454.8 473.5 L1457.6 471.2 V472.9 H1461.4 V474.1 H1457.6 V475.8 Z" fill="#d2d2d2"/><path d="M1497.7 464 V483" stroke="#8b8b8b" stroke-width="1.2"/><rect x="1500.10" y="466.30" width="7.80" height="1.30" fill="#8b8b8b"/><rect x="1500.10" y="469.85" width="5.60" height="1.30" fill="#8b8b8b"/><rect x="1500.10" y="473.40" width="7.80" height="1.30" fill="#8b8b8b"/><rect x="1500.10" y="476.95" width="5.60" height="1.30" fill="#8b8b8b"/><rect x="1500.10" y="480.50" width="7.80" height="1.30" fill="#8b8b8b"/><path d="M1495.6 473.5 L1492.6 471 V472.8 H1488 V474.2 H1492.6 V476 Z" fill="#8b8b8b"/><path d="M1518.40 464 V485.5" stroke="#dddddd" stroke-width="1"/><rect x="1530.10" y="466.00" width="9.80" height="2.60" fill="#8b8b8b"/><rect x="1530.10" y="470.15" width="15.60" height="2.60" fill="#8b8b8b"/><rect x="1530.10" y="474.30" width="12.60" height="2.60" fill="#8b8b8b"/><rect x="1530.10" y="478.45" width="16.90" height="2.60" fill="#8b8b8b"/><rect x="1567.45" y="466.00" width="9.80" height="2.60" fill="#8b8b8b"/><rect x="1564.55" y="470.15" width="15.60" height="2.60" fill="#8b8b8b"/><rect x="1566.05" y="474.30" width="12.60" height="2.60" fill="#8b8b8b"/><rect x="1563.90" y="478.45" width="16.90" height="2.60" fill="#8b8b8b"/><rect x="1605.10" y="466.00" width="9.80" height="2.60" fill="#8b8b8b"/><rect x="1599.30" y="470.15" width="15.60" height="2.60" fill="#8b8b8b"/><rect x="1602.30" y="474.30" width="12.60" height="2.60" fill="#8b8b8b"/><rect x="1598.00" y="478.45" width="16.90" height="2.60" fill="#8b8b8b"/><path d="M1626.50 464 V485.5" stroke="#dddddd" stroke-width="1"/><path d="M1642.5 465 H1639.8 Q1638.4 465 1638.4 466.4 V480 Q1638.4 481.4 1639.8 481.4 H1641.6" fill="none" stroke="#8b8b8b" stroke-width="1.3"/><path d="M1651.6 465 H1653.3 Q1654.7 465 1654.7 466.4 V469.6" fill="none" stroke="#8b8b8b" stroke-width="1.3"/><rect x="1642.6" y="463" width="8.6" height="3.6" rx="1.5" fill="#8b8b8b"/><rect x="1644.4" y="472.2" width="11.2" height="11.2" fill="none" stroke="#8b8b8b" stroke-width="1.3"/><path d="M1646.8 475.5 H1653.2 M1650 475.5 V481.2" stroke="#8b8b8b" stroke-width="1.5" fill="none"/><rect x="1671.5" y="468.5" width="11.6" height="8.4" rx="4.2" fill="none" stroke="#8b8b8b" stroke-width="1.5"/><rect x="1678.4" y="468.5" width="11.6" height="8.4" rx="4.2" fill="none" stroke="#8b8b8b" stroke-width="1.5"/><rect x="1675.60" y="471.70" width="10.40" height="2.10" fill="#8b8b8b"/><rect x="1739.70" y="462.20" width="16.60" height="1.10" fill="#8b8b8b"/><rect x="1739.70" y="465.40" width="16.60" height="1.10" fill="#8b8b8b"/><rect x="1739.70" y="468.60" width="16.60" height="1.10" fill="#8b8b8b"/><rect x="1738.00" y="472.20" width="20.00" height="2.70" fill="#8b8b8b"/><rect x="1739.70" y="477.60" width="16.60" height="1.10" fill="#8b8b8b"/><rect x="1739.70" y="480.80" width="16.60" height="1.10" fill="#8b8b8b"/><rect x="1739.70" y="484.00" width="16.60" height="1.10" fill="#8b8b8b"/><rect x="1772.6" y="465.5" width="18.4" height="16" fill="none" stroke="#8b8b8b" stroke-width="1.3"/><circle cx="1776.9" cy="469.8" r="1.7" fill="#8b8b8b"/><path d="M1773.8 480.6 V477.6 L1778.6 473.2 L1781.4 476.2 L1786.2 470.8 L1789.9 476 V480.6 Z" fill="#8b8b8b"/><rect x="1804.8" y="464.7" width="21.3" height="17.8" fill="none" stroke="#8b8b8b" stroke-width="1.4"/><rect x="1804.80" y="464.70" width="21.30" height="4.20" fill="#8b8b8b"/><path d="M1811.8 468 V482.5 M1819.1 468 V482.5 M1804.8 475.6 H1826.1" stroke="#8b8b8b" stroke-width="1.3" fill="none"/><path d="M1842.6 466.6 Q1842.6 464.3 1845 464.3 H1853.2 Q1855.6 464.3 1855.6 466.6" fill="none" stroke="#8b8b8b" stroke-width="1.6"/><path d="M1841.4 468.2 H1856.8 Q1859 468.2 1859 470.4 V478.8 H1855 V473.6 H1843.2 V478.8 H1839.2 V470.4 Q1839.2 468.2 1841.4 468.2 Z" fill="#8b8b8b"/><rect x="1845.1" y="475.4" width="8" height="7.2" fill="none" stroke="#8b8b8b" stroke-width="1.4"/><rect x="1846.20" y="477.40" width="5.80" height="1.40" fill="#8b8b8b"/></svg>
<div class="hdr" style="left:1303px;top:713.7px;width:615px;height:48.9px"></div><svg style="left:0;top:0" width="1" height="1"><path d="M1337.49 729.80 L1328.43 737.10 L1337.49 744.40" fill="none" stroke="#ffffff" stroke-width="2.60"/></svg><span class="t" style="left:1356.00px;top:730.00px;font-size:18.70px;color:#b3d9f9;letter-spacing:0.565px;">Details</span><svg style="left:0;top:0" width="1" height="1"><path d="M1869.81 729.80 L1878.67 737.10 L1869.81 744.40" fill="none" stroke="#ffffff" stroke-width="2.60"/></svg>
<div class="pbody" style="left:1302px;top:820px;width:617px;height:78.5px"></div><div class="hdr" style="left:1303px;top:772.7px;width:615px;height:49px"></div><svg style="left:0;top:0" width="1" height="1"><path d="M1337.49 788.80 L1328.43 796.10 L1337.49 803.40" fill="none" stroke="#ffffff" stroke-width="2.60"/></svg><span class="t" style="left:1357.13px;top:789.00px;font-size:18.70px;color:#b3d9f9;letter-spacing:0.859px;">Transformation</span><svg style="left:0;top:0" width="1" height="1"><path d="M1869.81 788.80 L1878.67 796.10 L1869.81 803.40" fill="none" stroke="#ffffff" stroke-width="2.60"/></svg><span class="t" style="left:1315.37px;top:850.00px;font-size:16.70px;color:#161616;letter-spacing:0.867px;-webkit-text-stroke:0.25px #161616;">Transformation</span><div class="ibtn" style="left:1493px;top:845px;width:412px;height:31px;border-color:#bdbdbd"></div><span class="t" style="left:1500.36px;top:854.00px;font-size:16.70px;color:#555555;letter-spacing:0.440px;">Keep</span><svg style="left:0;top:0" width="1" height="1"><path d="M1886.6 857.8 L1891.9 862.9 L1897.2 857.8" fill="none" stroke="#444" stroke-width="1.5"/></svg>
</section>
<svg style="left:0;top:0" width="1" height="1"><path d="M469.3 70.6 V52 a1.85 1.85 0 0 1 3.7 0 V59 q0.2 -2 2.2 -2 q2 0 2.2 2 q0.4 -1.6 2.2 -1.4 q1.8 0.2 2 1.8 q0.6 -1.2 2.2 -0.8 q2.1 0.7 2.2 3 V74 q-0.2 4.4 -3.2 6.6 q-2.6 1.8 -6.4 1.7 q-4 -0.2 -6.6 -3.4 L462.8 70.6 q-1.4 -2.2 0.6 -3.2 q1.6 -0.6 3 0.6 Z" fill="#ffffff" stroke="#2a2e36" stroke-width="1.1" stroke-linejoin="round"/><path d="M473.2 59 V64.4 M477.4 59.4 V64.4 M481.6 60 V64.4" stroke="#15171b" stroke-width="1.5" fill="none"/></svg>
</body>
</html>
